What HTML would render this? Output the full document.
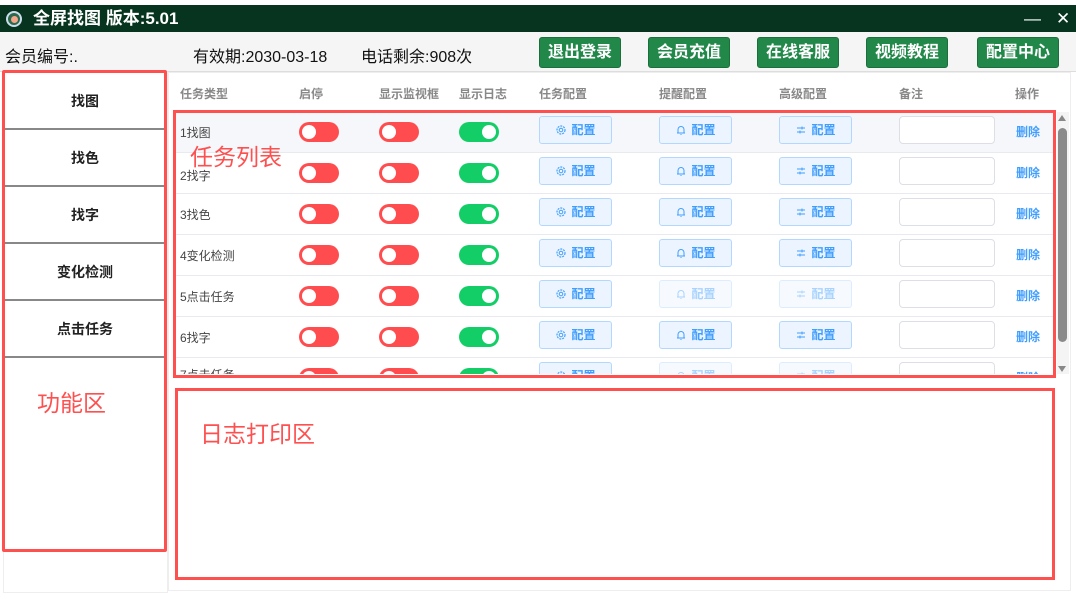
<!DOCTYPE html>
<html><head><meta charset="utf-8"><style>
*{margin:0;padding:0;box-sizing:border-box}
body{width:1076px;height:603px;background:#fff;position:relative;overflow:hidden;font-family:"Liberation Sans","Noto Sans CJK SC",sans-serif}
.a{position:absolute}
.title{left:0;top:5px;width:1076px;height:27px;background:#06341f;color:#fff;font-size:17px;font-weight:bold;line-height:27px}
.info{left:0;top:32px;width:1076px;height:40px;background:#f4f5f4;border-bottom:1px solid #ddd;font-size:16px;color:#111}
.gb{top:5px;height:31px;width:82px;background:#22884a;border:1px solid #1c6e3c;border-radius:3px;color:#fff;font-size:16px;font-weight:bold;text-align:center;line-height:29px}
.nav{left:4px;width:162px;height:57px;border-bottom:2px solid #888;font-size:14px;font-weight:bold;text-align:center;color:#222}
.hd{top:85px;font-size:12px;color:#888;font-weight:bold}
.row{left:173px;width:880px;height:41px;border-bottom:1px solid #e8eaef;font-size:12px;color:#444}
.sw{width:40px;height:20px;border-radius:10px;background:#ff4d4f;top:10px}
.sw::after{content:"";position:absolute;left:3px;top:3px;width:14px;height:14px;border-radius:50%;background:#fff}
.sw.g{background:#13ce66}.sw.g::after{left:23px}
.cb{top:4px;width:73px;height:28px;border:1px solid #b3d8ff;background:#ecf5ff;border-radius:3px;color:#409eff;font-size:12px;font-weight:bold;text-align:center;line-height:26px}
.cb svg{vertical-align:-2px;margin-right:4px}
.cb.f{opacity:.45}
.in{left:726px;top:4px;width:96px;height:28px;border:1px solid #dcdfe6;border-radius:4px;background:#fff}
.del{left:843px;top:11px;color:#409eff;font-weight:bold}
.red{border:3px solid #ff5050}
</style></head><body>
<svg width="0" height="0" style="position:absolute"><defs>
<symbol id="gear" viewBox="0 0 12 12"><circle cx="6" cy="6" r="4" fill="none" stroke="#409eff" stroke-width="1.2" stroke-dasharray="2 1"/><circle cx="6" cy="6" r="1.8" fill="none" stroke="#409eff"/></symbol>
<symbol id="bell" viewBox="0 0 12 12"><path d="M3 9V5.5a3 3 0 0 1 6 0V9M2 9h8M5.5 10.5h1" fill="none" stroke="#409eff"/></symbol>
<symbol id="sl" viewBox="0 0 12 12"><path d="M2 4h8M2 8h8M7 2.5v3M5 6.5v3" fill="none" stroke="#409eff"/></symbol>
</defs></svg>
<div class="a title"><span class="a" style="left:6px;top:6px;width:16px;height:16px;border-radius:50%;background:#2a6a4a;border:2px solid #cde"></span><span class="a" style="left:11px;top:11px;width:7px;height:7px;border-radius:50%;background:#f4a58a"></span><span class="a" style="left:33px;top:0">全屏找图 版本:5.01</span><span class="a" style="left:1024px;top:0;font-weight:normal">—</span><span class="a" style="left:1056px;top:0;font-weight:normal;font-size:17px">✕</span></div>
<div class="a info">
<span class="a" style="left:5px;top:11px">会员编号:.</span>
<span class="a" style="left:193px;top:11px">有效期:2030-03-18</span>
<span class="a" style="left:361px;top:11px">电话剩余:908次</span>
<div class="a gb" style="left:539px">退出登录</div>
<div class="a gb" style="left:648px">会员充值</div>
<div class="a gb" style="left:757px">在线客服</div>
<div class="a gb" style="left:866px">视频教程</div>
<div class="a gb" style="left:977px">配置中心</div>
</div>
<div class="a" style="left:3px;top:72px;width:165px;height:521px;border:1px solid #eee"></div>
<div class="a nav" style="top:73px;line-height:57px">找图</div>
<div class="a nav" style="top:130px;line-height:57px">找色</div>
<div class="a nav" style="top:187px;line-height:57px">找字</div>
<div class="a nav" style="top:244px;line-height:57px">变化检测</div>
<div class="a nav" style="top:301px;line-height:57px">点击任务</div>
<div class="a" style="left:168px;top:72px;width:903px;height:519px;border:1px solid #eee"></div>
<span class="a hd" style="left:180px">任务类型</span><span class="a hd" style="left:299px">启停</span><span class="a hd" style="left:379px">显示监视框</span><span class="a hd" style="left:459px">显示日志</span><span class="a hd" style="left:539px">任务配置</span><span class="a hd" style="left:659px">提醒配置</span><span class="a hd" style="left:779px">高级配置</span><span class="a hd" style="left:899px">备注</span><span class="a hd" style="left:1015px">操作</span>
<div class="a" style="left:170px;top:112px;width:886px;height:262px;overflow:hidden">
<div class="a row" style="left:3px;top:0;background:#f5f7fa"><span class="a" style="left:7px;top:12px">1找图</span><div class="a sw" style="left:126px"></div><div class="a sw" style="left:206px"></div><div class="a sw g" style="left:286px"></div><div class="a cb" style="left:366px"><svg width="12" height="12"><use href="#gear"/></svg>配置</div><div class="a cb" style="left:486px"><svg width="12" height="12"><use href="#bell"/></svg>配置</div><div class="a cb" style="left:606px"><svg width="12" height="12"><use href="#sl"/></svg>配置</div><div class="a in"></div><span class="a del">删除</span></div>
<div class="a row" style="left:3px;top:41px"><span class="a" style="left:7px;top:14px">2找字</span><div class="a sw" style="left:126px"></div><div class="a sw" style="left:206px"></div><div class="a sw g" style="left:286px"></div><div class="a cb" style="left:366px"><svg width="12" height="12"><use href="#gear"/></svg>配置</div><div class="a cb" style="left:486px"><svg width="12" height="12"><use href="#bell"/></svg>配置</div><div class="a cb" style="left:606px"><svg width="12" height="12"><use href="#sl"/></svg>配置</div><div class="a in"></div><span class="a del">删除</span></div>
<div class="a row" style="left:3px;top:82px"><span class="a" style="left:7px;top:12px">3找色</span><div class="a sw" style="left:126px"></div><div class="a sw" style="left:206px"></div><div class="a sw g" style="left:286px"></div><div class="a cb" style="left:366px"><svg width="12" height="12"><use href="#gear"/></svg>配置</div><div class="a cb" style="left:486px"><svg width="12" height="12"><use href="#bell"/></svg>配置</div><div class="a cb" style="left:606px"><svg width="12" height="12"><use href="#sl"/></svg>配置</div><div class="a in"></div><span class="a del">删除</span></div>
<div class="a row" style="left:3px;top:123px"><span class="a" style="left:7px;top:12px">4变化检测</span><div class="a sw" style="left:126px"></div><div class="a sw" style="left:206px"></div><div class="a sw g" style="left:286px"></div><div class="a cb" style="left:366px"><svg width="12" height="12"><use href="#gear"/></svg>配置</div><div class="a cb" style="left:486px"><svg width="12" height="12"><use href="#bell"/></svg>配置</div><div class="a cb" style="left:606px"><svg width="12" height="12"><use href="#sl"/></svg>配置</div><div class="a in"></div><span class="a del">删除</span></div>
<div class="a row" style="left:3px;top:164px"><span class="a" style="left:7px;top:12px">5点击任务</span><div class="a sw" style="left:126px"></div><div class="a sw" style="left:206px"></div><div class="a sw g" style="left:286px"></div><div class="a cb" style="left:366px"><svg width="12" height="12"><use href="#gear"/></svg>配置</div><div class="a cb f" style="left:486px"><svg width="12" height="12"><use href="#bell"/></svg>配置</div><div class="a cb f" style="left:606px"><svg width="12" height="12"><use href="#sl"/></svg>配置</div><div class="a in"></div><span class="a del">删除</span></div>
<div class="a row" style="left:3px;top:205px"><span class="a" style="left:7px;top:12px">6找字</span><div class="a sw" style="left:126px"></div><div class="a sw" style="left:206px"></div><div class="a sw g" style="left:286px"></div><div class="a cb" style="left:366px"><svg width="12" height="12"><use href="#gear"/></svg>配置</div><div class="a cb" style="left:486px"><svg width="12" height="12"><use href="#bell"/></svg>配置</div><div class="a cb" style="left:606px"><svg width="12" height="12"><use href="#sl"/></svg>配置</div><div class="a in"></div><span class="a del">删除</span></div>
<div class="a row" style="left:3px;top:246px"><span class="a" style="left:7px;top:8px">7点击任务</span><div class="a sw" style="left:126px"></div><div class="a sw" style="left:206px"></div><div class="a sw g" style="left:286px"></div><div class="a cb" style="left:366px"><svg width="12" height="12"><use href="#gear"/></svg>配置</div><div class="a cb f" style="left:486px"><svg width="12" height="12"><use href="#bell"/></svg>配置</div><div class="a cb f" style="left:606px"><svg width="12" height="12"><use href="#sl"/></svg>配置</div><div class="a in"></div><span class="a del">删除</span></div>
</div>
<div class="a" style="left:1057px;top:112px;width:12px;height:262px;background:#f4f4f4"></div>
<div class="a" style="left:1058px;top:128px;width:9px;height:214px;background:#8a8a8a;border-radius:5px"></div>
<div class="a" style="left:1058px;top:115px;width:0;height:0;border:4px solid transparent;border-bottom:6px solid #888;border-top:0"></div>
<div class="a" style="left:1058px;top:366px;width:0;height:0;border:4px solid transparent;border-top:6px solid #888;border-bottom:0"></div>
<div class="a red" style="left:2px;top:70px;width:165px;height:482px;border-radius:2px"></div>
<div class="a red" style="left:173px;top:110px;width:883px;height:268px"></div>
<div class="a red" style="left:175px;top:388px;width:880px;height:192px"></div>
<span class="a" style="left:190px;top:138px;font-size:23px;color:#ff5050">任务列表</span>
<span class="a" style="left:37px;top:384px;font-size:23px;color:#ff5050">功能区</span>
<span class="a" style="left:200px;top:415px;font-size:23px;color:#ff5050">日志打印区</span>
</body></html>
